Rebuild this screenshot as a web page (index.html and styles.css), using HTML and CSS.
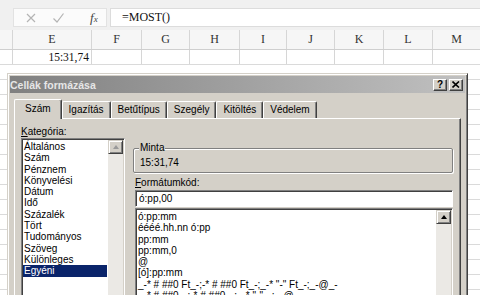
FILE: index.html
```html
<!DOCTYPE html>
<html lang="hu">
<head>
    <meta charset="UTF-8">
    <title>Cellák formázása</title>
    <link rel="stylesheet" href="styles.css">
</head>
<body>
    <div class="formula-bar">
        <div class="fx-box">
            <svg class="fb-icon" width="12" height="12" viewBox="0 0 12 12"><path d="M2 2 L10 10 M10 2 L2 10" stroke="#b4b4b4" stroke-width="1.2" fill="none"/></svg>
            <svg class="fb-icon" width="13" height="12" viewBox="0 0 13 12"><path d="M1.5 6.5 L5 10 L11.5 1.5" stroke="#b4b4b4" stroke-width="1.2" fill="none"/></svg>
            <span class="fx">f<sub>x</sub></span>
        </div>
        <div class="formula">=MOST()</div>
    </div>

    <div class="col-head">
        <div class="cell c-d"></div>
        <div class="cell c-e">E</div>
        <div class="cell c-f">F</div>
        <div class="cell c-g">G</div>
        <div class="cell c-h">H</div>
        <div class="cell c-i">I</div>
        <div class="cell c-j">J</div>
        <div class="cell c-k">K</div>
        <div class="cell c-l">L</div>
        <div class="cell c-m">M</div>
    </div>
    <div class="sheet-row">
        <div class="cell c-d"></div>
        <div class="cell c-e num">15:31,74</div>
        <div class="cell c-f"></div>
        <div class="cell c-g"></div>
        <div class="cell c-h"></div>
        <div class="cell c-i"></div>
        <div class="cell c-j"></div>
        <div class="cell c-k"></div>
        <div class="cell c-l"></div>
        <div class="cell c-m"></div>
    </div>
    <div class="sheet-rest"></div>

    <div class="dialog">
        <div class="titlebar">
            <span class="title">Cellák formázása</span>
            <div class="title-btns">
                <div class="tbtn">?</div>
                <div class="tbtn">
                    <svg width="8" height="7" viewBox="0 0 8 7"><path d="M0.5 0.5 L7 6.5 M7 0.5 L0.5 6.5" stroke="#000" stroke-width="1.6" fill="none"/></svg>
                </div>
            </div>
        </div>

        <div class="tabs">
            <div class="tab active">Szám</div>
            <div class="tab">Igazítás</div>
            <div class="tab">Betűtípus</div>
            <div class="tab">Szegély</div>
            <div class="tab">Kitöltés</div>
            <div class="tab">Védelem</div>
        </div>

        <div class="panel">
            <div class="left-col">
                <div class="label"><u>K</u>ategória:</div>
                <div class="listbox cat-list">
                    <div class="items">
                        <div class="item">Általános</div>
                        <div class="item">Szám</div>
                        <div class="item">Pénznem</div>
                        <div class="item">Könyvelési</div>
                        <div class="item">Dátum</div>
                        <div class="item">Idő</div>
                        <div class="item">Százalék</div>
                        <div class="item">Tört</div>
                        <div class="item">Tudományos</div>
                        <div class="item">Szöveg</div>
                        <div class="item">Különleges</div>
                        <div class="item selected">Egyéni</div>
                    </div>
                    <div class="scrollbar">
                        <div class="sb-btn"><span class="arrow-up"></span></div>
                    </div>
                </div>
            </div>

            <div class="right-col">
                <div class="groupbox">
                    <span class="group-label">Minta</span>
                    <div class="sample">15:31,74</div>
                </div>
                <div class="label code-label"><u>F</u>ormátumkód:</div>
                <div class="code-input">ó:pp,00</div>
                <div class="listbox code-list">
                    <div class="items">
                        <div class="item">ó:pp:mm</div>
                        <div class="item">éééé.hh.nn ó:pp</div>
                        <div class="item">pp:mm</div>
                        <div class="item">pp:mm,0</div>
                        <div class="item">@</div>
                        <div class="item">[ó]:pp:mm</div>
                        <div class="item">_-* # ##0 Ft_-;-* # ##0 Ft_-;_-* "-" Ft_-;_-@_-</div>
                        <div class="item">_-* # ##0_-;-* # ##0_-;_-* "-"_-;_-@_-</div>
                    </div>
                    <div class="scrollbar">
                        <div class="sb-btn"><span class="arrow-up"></span></div>
                    </div>
                </div>
            </div>
        </div>
    </div>
</body>
</html>
```

FILE: styles.css
```css
body {
    margin: 0;
    width: 480px;
    height: 295px;
    overflow: hidden;
    background: #fff;
    font-family: "Liberation Serif", serif;
    position: relative;
}

/* formula bar */
.formula-bar {
    height: 30px;
    background: #f0f0f0;
    display: flex;
    align-items: flex-start;
    padding-top: 8px;
    box-sizing: border-box;
}
.fx-box {
    margin-left: 13px;
    width: 94px;
    height: 19px;
    background: #fbfbfb;
    border: 1px solid #e2e2e2;
    box-sizing: border-box;
    display: flex;
    align-items: center;
    gap: 15px;
    padding-left: 11px;
}
.fx {
    font-style: italic;
    font-size: 13px;
    color: #444;
    margin-left: 10px;
}
.fx sub {
    font-size: 9px;
    vertical-align: 0;
}
.formula {
    margin-left: 3px;
    flex: 1;
    height: 19px;
    background: #fff;
    border: 1px solid #dcdcdc;
    border-right: none;
    box-sizing: border-box;
    font-size: 12px;
    line-height: 17px;
    padding-left: 11px;
    color: #111;
}

/* sheet */
.col-head, .sheet-row {
    display: flex;
}
.col-head {
    height: 20px;
    background: #f6f6f6;
    border-bottom: 1px solid #cfcfcf;
    box-sizing: border-box;
}
.sheet-row {
    height: 15px;
    border-bottom: 1px solid #dadada;
    box-sizing: border-box;
}
.cell {
    border-right: 1px solid #d6d6d6;
    box-sizing: border-box;
    font-size: 12px;
    color: #333;
    text-align: center;
    line-height: 19px;
}
.sheet-row .cell {
    font-size: 11.5px;
    line-height: 14px;
    color: #111;
}
.cell.num {
    text-align: right;
    padding-right: 2px;
}
.c-d { width: 13px; }
.c-e { width: 79px; }
.c-f { width: 50px; }
.c-g { width: 48px; }
.c-h { width: 50px; }
.c-i { width: 47px; }
.c-j { width: 48px; }
.c-k { width: 49px; }
.c-l { width: 49px; }
.c-m { flex: 1; border-right: none; }
.sheet-rest {
    height: 240px;
    background: repeating-linear-gradient(to bottom, #fff 0, #fff 14px, #dadada 14px, #dadada 15px);
}

/* dialog */
.dialog {
    position: absolute;
    left: 7px;
    top: 73px;
    width: 461px;
    height: 240px;
    background: #d4d0c8;
    border: 1px solid;
    border-color: #d4d0c8 #404040 #404040 #d4d0c8;
    box-shadow: inset 1px 1px 0 #fff, inset -1px -1px 0 #808080;
    box-sizing: border-box;
    padding: 2px;
    font-family: "Liberation Sans", Arial, sans-serif;
    font-size: 10px;
    color: #000;
}
.titlebar {
    height: 17px;
    background: linear-gradient(to right, #808080, #c0c0c0);
    display: flex;
    align-items: center;
    justify-content: space-between;
    padding: 0 2px 0 0;
}
.title {
    color: #e6e6e6;
    font-weight: bold;
    font-size: 10.5px;
}
.title-btns {
    display: flex;
    gap: 2px;
}
.tbtn {
    width: 14px;
    height: 12px;
    background: #d4d0c8;
    box-sizing: border-box;
    border: 1px solid;
    border-color: #fff #404040 #404040 #fff;
    box-shadow: inset -1px -1px 0 #808080;
    font-weight: bold;
    font-size: 10px;
    line-height: 10px;
    text-align: center;
    display: flex;
    align-items: center;
    justify-content: center;
}

/* tabs */
.tabs {
    display: flex;
    align-items: flex-end;
    margin-top: 5px;
    padding-left: 4px;
    height: 20px;
    position: relative;
    z-index: 1;
}
.tab {
    height: 16px;
    padding: 0 6px;
    border: 1px solid;
    border-color: #fff #404040 transparent #fff;
    border-bottom: none;
    box-shadow: inset -1px 0 0 #808080;
    border-radius: 2px 2px 0 0;
    line-height: 16px;
}
.tab.active {
    height: 19px;
    padding: 0 10px;
    background: #d4d0c8;
    margin-bottom: -1px;
    line-height: 18px;
}

.panel {
    margin: 0 4px 0 4px;
    height: 200px;
    border: 1px solid;
    border-color: #fff #404040 #404040 #fff;
    box-shadow: inset -1px 0 0 #808080;
    display: flex;
    gap: 8px;
    padding: 7px 0 0 6px;
}

.label {
    line-height: 12px;
    height: 12px;
}
.left-col {
    width: 104px;
}
.right-col {
    width: 320px;
}

/* list boxes */
.listbox {
    display: flex;
    background: #fff;
    border: 1px solid;
    border-color: #808080 #fff #fff #808080;
    box-shadow: inset 1px 1px 0 #404040, inset -1px -1px 0 #d4d0c8;
    padding: 1px;
    height: 170px;
    box-sizing: border-box;
}
.items {
    flex: 1;
    padding-top: 1px;
    white-space: nowrap;
    overflow: hidden;
}
.item {
    height: 11.3px;
    line-height: 11.3px;
    padding-left: 1px;
    margin-right: 1px;
}
.item.selected {
    background: #0a246a;
    color: #fff;
}
.scrollbar {
    width: 15px;
    background: #ebe9e5;
}
.sb-btn {
    height: 14px;
    background: #d4d0c8;
    box-sizing: border-box;
    border: 1px solid;
    border-color: #d4d0c8 #404040 #404040 #d4d0c8;
    box-shadow: inset 1px 1px 0 #fff, inset -1px -1px 0 #808080;
    display: flex;
    align-items: center;
    justify-content: center;
}
.arrow-up {
    width: 0;
    height: 0;
    border-left: 3.5px solid transparent;
    border-right: 3.5px solid transparent;
    border-bottom: 4px solid #000;
}
.cat-list .arrow-up {
    border-bottom-color: #999;
}

/* right side */
.groupbox {
    margin-top: 22px;
    height: 25px;
    border: 1px solid #808080;
    box-shadow: 1px 1px 0 #fff, inset 1px 1px 0 #fff;
    border-radius: 2px;
    position: relative;
    box-sizing: border-box;
}
.group-label {
    position: absolute;
    left: 5px;
    top: -7px;
    background: #d4d0c8;
    padding: 0 1px;
    line-height: 12px;
}
.sample {
    padding: 8px 0 0 6px;
    line-height: 12px;
}
.code-label {
    margin-top: 4px;
    margin-left: 2px;
}
.code-input {
    margin: 1px 0 0 2px;
    height: 17px;
    background: #fff;
    box-sizing: border-box;
    border: 1px solid;
    border-color: #808080 #fff #fff #808080;
    box-shadow: inset 1px 1px 0 #404040;
    padding-left: 3px;
    line-height: 15px;
}
.code-list {
    margin: 1px 0 0 2px;
    height: 100px;
}
```
